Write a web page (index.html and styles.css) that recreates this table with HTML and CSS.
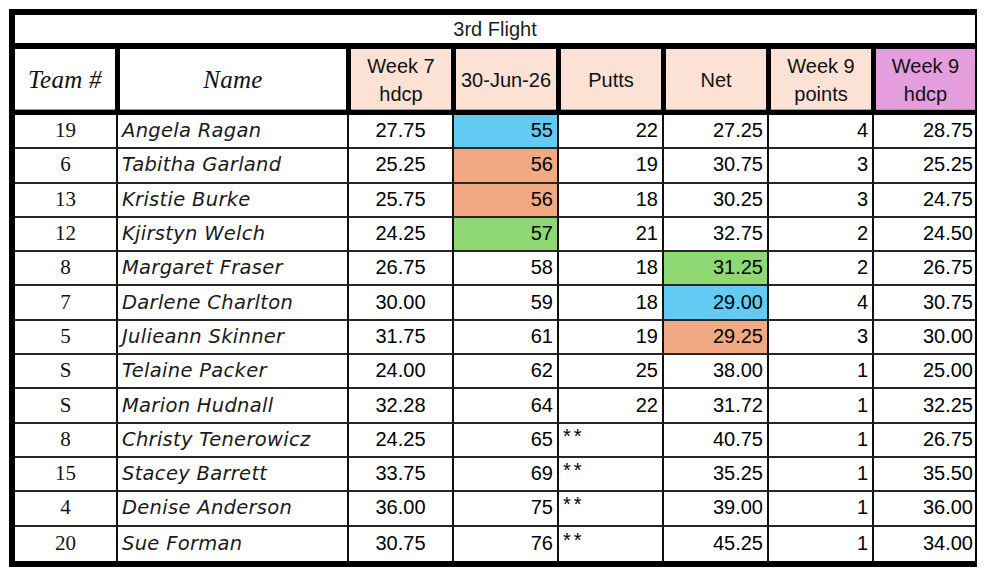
FILE: index.html
```html
<!DOCTYPE html>
<html lang="en">
<head>
<meta charset="utf-8">
<title>3rd Flight</title>
<link rel="stylesheet" href="styles.css">
</head>
<body>
<table class="sheet">
  <colgroup>
    <col class="c-team"><col class="c-name"><col class="c-std"><col class="c-std"><col class="c-std"><col class="c-std"><col class="c-std"><col class="c-last">
  </colgroup>
  <tr class="title-row">
    <td class="title" colspan="8">3rd Flight</td>
  </tr>
  <tr class="head-row">
    <th class="h h-first h-script">Team #</th>
    <th class="h h-script">Name</th>
    <th class="h peach">Week 7<br>hdcp</th>
    <th class="h peach">30-Jun-26</th>
    <th class="h peach">Putts</th>
    <th class="h peach">Net</th>
    <th class="h peach">Week 9<br>points</th>
    <th class="h h-last purple">Week 9<br>hdcp</th>
  </tr>
  <tr class="row"><td class="team">19</td><td class="name">Angela Ragan</td><td class="ctr">27.75</td><td class="num blue">55</td><td class="num">22</td><td class="num">27.25</td><td class="num">4</td><td class="num last">28.75</td></tr>
  <tr class="row"><td class="team">6</td><td class="name">Tabitha Garland</td><td class="ctr">25.25</td><td class="num orange">56</td><td class="num">19</td><td class="num">30.75</td><td class="num">3</td><td class="num last">25.25</td></tr>
  <tr class="row"><td class="team">13</td><td class="name">Kristie Burke</td><td class="ctr">25.75</td><td class="num orange">56</td><td class="num">18</td><td class="num">30.25</td><td class="num">3</td><td class="num last">24.75</td></tr>
  <tr class="row"><td class="team">12</td><td class="name">Kjirstyn Welch</td><td class="ctr">24.25</td><td class="num green">57</td><td class="num">21</td><td class="num">32.75</td><td class="num">2</td><td class="num last">24.50</td></tr>
  <tr class="row"><td class="team">8</td><td class="name">Margaret Fraser</td><td class="ctr">26.75</td><td class="num">58</td><td class="num">18</td><td class="num green">31.25</td><td class="num">2</td><td class="num last">26.75</td></tr>
  <tr class="row"><td class="team">7</td><td class="name">Darlene Charlton</td><td class="ctr">30.00</td><td class="num">59</td><td class="num">18</td><td class="num blue">29.00</td><td class="num">4</td><td class="num last">30.75</td></tr>
  <tr class="row"><td class="team">5</td><td class="name">Julieann Skinner</td><td class="ctr">31.75</td><td class="num">61</td><td class="num">19</td><td class="num orange">29.25</td><td class="num">3</td><td class="num last">30.00</td></tr>
  <tr class="row"><td class="team">S</td><td class="name">Telaine Packer</td><td class="ctr">24.00</td><td class="num">62</td><td class="num">25</td><td class="num">38.00</td><td class="num">1</td><td class="num last">25.00</td></tr>
  <tr class="row"><td class="team">S</td><td class="name">Marion Hudnall</td><td class="ctr">32.28</td><td class="num">64</td><td class="num">22</td><td class="num">31.72</td><td class="num">1</td><td class="num last">32.25</td></tr>
  <tr class="row"><td class="team">8</td><td class="name">Christy Tenerowicz</td><td class="ctr">24.25</td><td class="num">65</td><td class="star">**</td><td class="num">40.75</td><td class="num">1</td><td class="num last">26.75</td></tr>
  <tr class="row"><td class="team">15</td><td class="name">Stacey Barrett</td><td class="ctr">33.75</td><td class="num">69</td><td class="star">**</td><td class="num">35.25</td><td class="num">1</td><td class="num last">35.50</td></tr>
  <tr class="row"><td class="team">4</td><td class="name">Denise Anderson</td><td class="ctr">36.00</td><td class="num">75</td><td class="star">**</td><td class="num">39.00</td><td class="num">1</td><td class="num last">36.00</td></tr>
  <tr class="row row-last"><td class="team">20</td><td class="name">Sue Forman</td><td class="ctr">30.75</td><td class="num">76</td><td class="star">**</td><td class="num">45.25</td><td class="num">1</td><td class="num last">34.00</td></tr>
</table>
</body>
</html>
```
FILE: styles.css
```css
html, body {
  background: #ffffff;
}
body {
  margin: 9px;
  font-family: "Liberation Sans", Arial, sans-serif;
  color: #000;
}
.sheet {
  border-collapse: separate;
  border-spacing: 0;
  table-layout: fixed;
  width: 972px;
  border: 6px solid #000;
}
.c-team { width: 103px; }
.c-name { width: 231px; }
.c-std { width: 105px; }
.c-last { width: 101px; }

.sheet td, .sheet th {
  box-sizing: border-box;
  padding: 0 4px;
  white-space: nowrap;
  overflow: hidden;
  font-size: 20px;
  font-weight: normal;
}

/* title row */
.title-row { height: 34px; }
.title {
  text-align: center;
  border-bottom: 6px solid #000;
  color: #1e1e1e;
  padding-top: 1px;
  line-height: 24px;
}

/* header row */
.head-row { height: 66px; }
.h {
  background: #fff;
  text-align: center;
  vertical-align: middle;
  line-height: 28px;
  border-bottom: 5px solid #000;
  border-left: 2px solid #000;
  border-right: 3px solid #000;
  box-shadow: inset 0 -1px 0 #9a9a9a;
  color: #111;
}
.h-first { border-left: 0; }
.h-last { border-right: 0; }
.h-script {
  font-family: "Liberation Serif", "Times New Roman", serif;
  font-style: italic;
  font-size: 25px !important;
  letter-spacing: 0.3px;
  color: #111;
}
.peach { background: #FBE2D5; }
.purple { background: #E49EDD; }

/* body rows */
.row { height: 34.31px; }
.row td {
  border-right: 2px solid #111;
  border-bottom: 2px solid #262626;
  vertical-align: middle;
  padding-bottom: 1px;
}
.row-last td { border-bottom: 0; }
.row td.last { border-right: 0; padding-right: 2px; }

.team {
  text-align: center;
  font-family: "Liberation Serif", "Times New Roman", serif;
  font-size: 21px !important;
  color: #111;
}
.name {
  text-align: left;
  font-family: "DejaVu Sans", sans-serif;
  font-style: oblique;
  font-size: 19.5px !important;
  letter-spacing: 0.3px;
  color: #1a1a1a;
  padding-top: 3px;
}
.ctr { text-align: center; }
.num { text-align: right; }
.star {
  text-align: left;
  font-size: 20px !important;
  letter-spacing: 3px;
  padding-bottom: 7px !important;
}

.blue { background: #61CBF3; }
.orange { background: #F1A983; }
.green { background: #8ED973; }
```
